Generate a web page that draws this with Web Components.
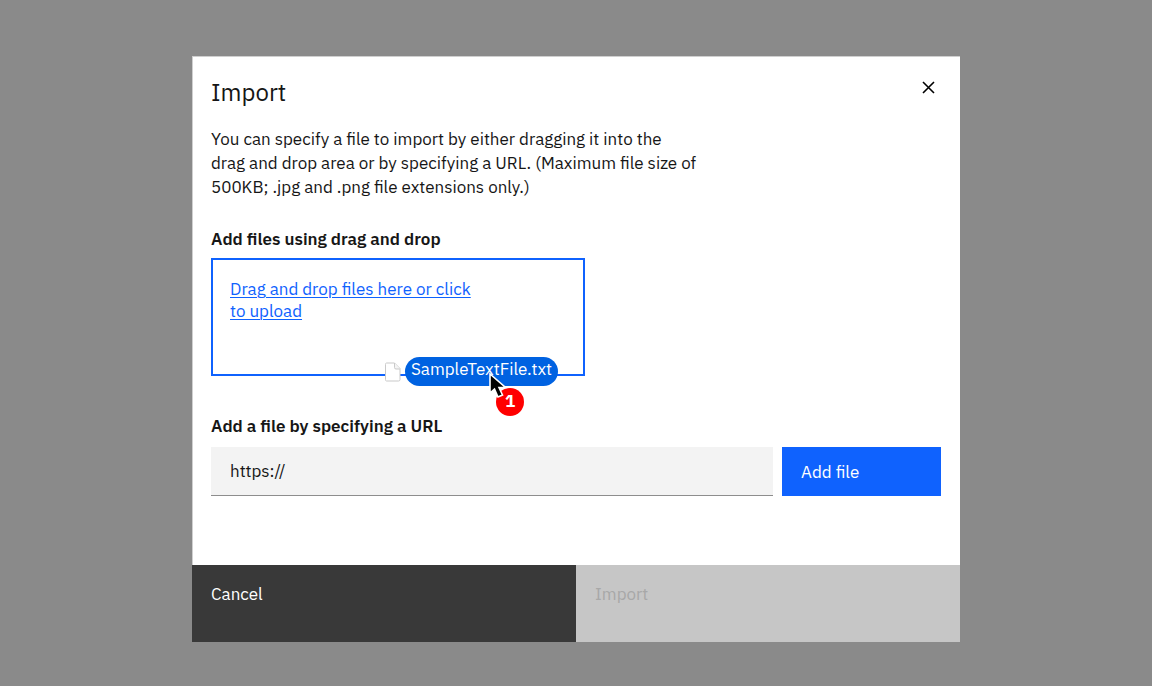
<!DOCTYPE html>
<html lang="en">
<head>
<meta charset="utf-8">
<meta name="viewport" content="width=device-width, initial-scale=1">
<title>Import</title>
<style>
  html { height: 100%; }
  body {
    margin: 0;
    min-height: 100%;
    box-sizing: border-box;
    padding: 56px 0 44px;
    display: flex;
    justify-content: center;
    align-items: flex-start;
    background: #8a8a8a;
    color: #161616;
    font: 17px/24px "IBM Plex Sans", "Noto Sans", sans-serif;
  }
</style>
</head>
<body>
<import-dialog>
  <span slot="title">Import</span>
  <span slot="description">You can specify a file to import by either dragging it into the<br>drag and drop area or by specifying a URL. (Maximum file size of<br>500KB; .jpg and .png file extensions only.)</span>
  <drop-zone heading="Add files using drag and drop">
    Drag and drop files here or click<br>to upload
    <drag-ghost slot="ghost" count="1">SampleTextFile.txt</drag-ghost>
  </drop-zone>
  <url-field label="Add a file by specifying a URL" value="https://">Add file</url-field>
  <dialog-button slot="actions" kind="secondary">Cancel</dialog-button>
  <dialog-button slot="actions" disabled>Import</dialog-button>
</import-dialog>

<template id="import-dialog">
  <style>
    :host { display: block; width: calc(100% * 2 / 3); background: #fff; }
    section { display: flex; flex-direction: column; box-shadow: inset 1px 1px #cfcfcf; }
    header { display: flex; justify-content: space-between; align-items: flex-start; padding: 20px 19px 0; }
    h1 { margin: 0; font-size: 24px; line-height: 32px; font-weight: 400; }
    .close { width: 24px; height: 24px; padding: 0; border: 0; background: none; display: grid; place-items: center; cursor: pointer; }
    .body { padding: 19px 19px 69px; }
    p { margin: 0 0 28px; }
    ::slotted(drop-zone) { margin-bottom: 38px; }
    footer { display: grid; grid-template-columns: 1fr 1fr; }
  </style>
  <section role="dialog" aria-labelledby="title">
    <header>
      <h1 id="title"><slot name="title"></slot></h1>
      <button class="close" type="button" aria-label="Close">
        <svg width="14" height="14" viewBox="0 0 14 14" fill="none" stroke="#000" stroke-width="1.6"><path d="M1 1 12 12M12 1 1 12"/></svg>
      </button>
    </header>
    <div class="body">
      <p><slot name="description"></slot></p>
      <slot></slot>
    </div>
    <footer><slot name="actions"></slot></footer>
  </section>
</template>

<template id="drop-zone">
  <style>
    :host { display: block; }
    h2 { margin: 0 0 7px; font-size: 17px; line-height: 24px; font-weight: 600; }
    .zone { position: relative; box-sizing: border-box; width: 374px; max-width: 100%; min-height: 118px; padding: 18px 17px; border: 2px solid #0f62fe; }
    a { color: #0f62fe; line-height: 22px; display: block; text-underline-offset: 2px; text-decoration-thickness: 1px; }
    ::slotted(drag-ghost) { position: absolute; right: 25px; bottom: -12px; }
  </style>
  <h2></h2>
  <div class="zone">
    <a href="#upload"><slot></slot></a>
    <slot name="ghost"></slot>
  </div>
</template>

<template id="drag-ghost">
  <style>
    :host { display: flex; align-items: center; gap: 4px; }
    .name { box-sizing: border-box; height: 29px; padding: 0 6px; border-radius: 15px; background: #0062e1; color: #fff; line-height: 25px; white-space: nowrap; }
    svg { display: block; }
    .cursor { position: absolute; right: 46px; top: 15px; z-index: 1; }
    .count { position: absolute; right: 34px; top: 31px; width: 28px; height: 28px; border-radius: 50%; background: #f00; color: #fff; font-weight: 700; line-height: 27px; text-align: center; }
  </style>
  <svg width="16" height="20" viewBox="0 0 16 20" fill="#fff" stroke="#c9c9c9"><path d="M1.5 1h8L15 6.500V17.500Q15 19 13.500 19h-12Q.5 19 .5 17.500V2.500Q.5 1 1.500 1Z"/><path d="M9.500 1v4.500q0 1.500 1.500 1.500h4" fill="#f4f4f4"/></svg>
  <span class="name"><slot></slot></span>
  <span class="count"></span>
  <svg class="cursor" width="24" height="28" viewBox="0 0 24 28"><path d="M2 2V21L6.500 17 10 25 14.500 23 11 15.500H17.500Z" fill="#000" stroke="#fff" stroke-width="1.600"/></svg>
</template>

<template id="url-field">
  <style>
    :host { display: block; }
    label { display: block; margin-bottom: 9px; font-weight: 600; }
    .row { display: flex; gap: 9px; }
    input, button { box-sizing: border-box; height: 49px; margin: 0; border: 0; border-radius: 0; font: inherit; padding: 0 19px; }
    input { flex: 1; min-width: 0; background: #f3f3f3; color: #161616; border-bottom: 1px solid #8d8d8d; outline: 0; }
    button { width: 159px; background: #0f62fe; color: #fff; text-align: left; cursor: pointer; }
  </style>
  <label for="url"></label>
  <div class="row">
    <input id="url" type="text">
    <button type="button"><slot></slot></button>
  </div>
</template>

<template id="dialog-button">
  <style>
    :host { display: block; }
    button { display: flex; align-items: flex-start; width: 100%; height: 77px; margin: 0; padding: 17px 19px; border: 0; border-radius: 0; font: inherit; background: #0f62fe; color: #fff; text-align: left; cursor: pointer; }
    :host([kind="secondary"]) button { background: #393939; }
    button:disabled { background: #c6c6c6; color: #a8a8a8; cursor: not-allowed; }
  </style>
  <button type="button"><slot></slot></button>
</template>

<script>
  class TemplateElement extends HTMLElement {
    constructor() {
      super();
      const template = document.getElementById(this.localName);
      this.attachShadow({ mode: "open" }).append(template.content.cloneNode(true));
    }
    find(selector) { return this.shadowRoot.querySelector(selector); }
  }

  customElements.define("import-dialog", class extends TemplateElement {
    connectedCallback() {
      this.find(".close").addEventListener("click", () => { this.hidden = true; });
    }
  });
  customElements.define("drop-zone", class extends TemplateElement {
    connectedCallback() { this.find("h2").textContent = this.getAttribute("heading"); }
  });
  customElements.define("drag-ghost", class extends TemplateElement {
    connectedCallback() { this.find(".count").textContent = this.getAttribute("count"); }
  });
  customElements.define("url-field", class extends TemplateElement {
    connectedCallback() {
      this.find("label").textContent = this.getAttribute("label");
      this.find("input").value = this.getAttribute("value");
    }
  });
  customElements.define("dialog-button", class extends TemplateElement {
    connectedCallback() { this.find("button").disabled = this.hasAttribute("disabled"); }
  });
</script>
</body>
</html>
